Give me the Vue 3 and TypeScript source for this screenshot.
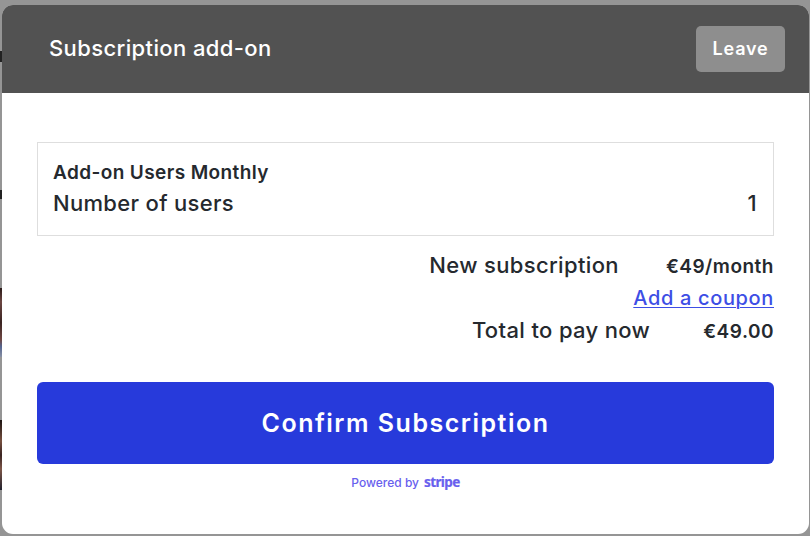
<script setup lang="ts">
interface AddOn {
  name: string
  label: string
  quantity: number
}

const addOn: AddOn = { name: 'Add-on Users Monthly', label: 'Number of users', quantity: 1 }
const recurring: string = '€49/month'
const total: string = '€49.00'
</script>

<template>
  <div class="backdrop">
    <section class="modal" role="dialog" aria-labelledby="title">
      <header class="head">
        <h1 id="title"><span>Subscription add-on</span></h1>
        <button class="leave" type="button"><span>Leave</span></button>
      </header>
      <main class="body">
        <div class="item">
          <div class="name"><span>{{ addOn.name }}</span></div>
          <div class="qty">
            <span>{{ addOn.label }}</span>
            <span class="num">{{ addOn.quantity }}</span>
          </div>
        </div>
        <div class="summary">
          <div class="row">
            <span class="label">New subscription</span>
            <strong class="monthly">{{ recurring }}</strong>
          </div>
          <div class="row discount"><a class="coupon" href="#">Add a coupon</a></div>
          <div class="row last">
            <span class="label pay">Total to pay now</span>
            <strong class="total">{{ total }}</strong>
          </div>
        </div>
        <button class="confirm" type="button"><span>Confirm Subscription</span></button>
        <div class="powered"><span class="by">Powered by</span><span class="stripe">stripe</span></div>
      </main>
    </section>
  </div>
</template>

<style>
body {
  margin: 0;
  background: #959595;
}
</style>

<style scoped>
.backdrop {
  box-sizing: border-box;
  width: 810px;
  height: 536px;
  padding: 5px 1px 2px 2px;
  background:
    linear-gradient(#222, #222) 0 51px / 2px 11px no-repeat,
    linear-gradient(#222, #222) 0 190px / 2px 9px no-repeat,
    linear-gradient(#2a1a18, #6b4642 20%, #3a2422 50%, #704844 75%, #55658f 85%, #8890a4) 0 288px / 2px 69px no-repeat,
    linear-gradient(#1c1412, #76503f 30%, #3a2422 50%, #7d5648 70%, #22222e) 0 420px / 2px 70px no-repeat,
    #959595;
  font-family: Inter, "Liberation Sans", sans-serif;
  color: #25292e;
}
.modal {
  display: flex;
  flex-direction: column;
  height: 529px;
  border-radius: 11px;
  overflow: hidden;
  background: #fff;
}
.head {
  box-sizing: border-box;
  display: flex;
  align-items: center;
  justify-content: space-between;
  height: 88px;
  padding: 0 24px 0 47px;
  background: #525252;
  color: #fff;
}
h1 {
  margin: -3px 0 0;
  font-size: 22px;
  line-height: 28px;
  font-weight: 500;
  letter-spacing: 0.38px;
}
button {
  border: 0;
  padding: 0;
  font-family: inherit;
  color: #fff;
}
.leave {
  width: 89px;
  height: 46px;
  margin-top: -1px;
  border-radius: 5px;
  background: #8e8e8e;
  font-size: 18px;
  font-weight: 600;
  letter-spacing: 0.8px;
}
.body {
  padding: 49px 35px 0;
}
.item {
  box-sizing: border-box;
  height: 94px;
  padding: 15px 15px 0;
  border: 1px solid #dedede;
}
.name {
  font-size: 19px;
  font-weight: 600;
  line-height: 30px;
  letter-spacing: 0.4px;
}
.qty {
  display: flex;
  justify-content: space-between;
  font-size: 22px;
  font-weight: 500;
  line-height: 30px;
  letter-spacing: 0.32px;
}
.num {
  padding-right: 1px;
}
.summary {
  padding-top: 13px;
}
.row {
  display: flex;
  justify-content: flex-end;
  align-items: baseline;
  height: 32px;
  line-height: 32px;
  font-size: 22px;
}
.row.discount {
  box-sizing: border-box;
  height: 33px;
  padding-top: 1px;
}
.label {
  font-weight: 500;
  letter-spacing: 0.35px;
  margin-right: 47px;
}
.pay {
  margin-right: 53px;
}
strong {
  font-size: 19px;
  font-weight: 600;
  letter-spacing: 0.5px;
}
.coupon {
  color: #3d4ee5;
  font-size: 20px;
  font-weight: 500;
  letter-spacing: 0.65px;
  text-decoration-thickness: 1px;
  text-underline-offset: 2px;
}
.confirm {
  display: block;
  width: 100%;
  height: 82px;
  margin-top: 36px;
  border-radius: 6px;
  background: #273adb;
  font-size: 25px;
  font-weight: 600;
  letter-spacing: 1.5px;
}
.powered {
  display: flex;
  justify-content: center;
  align-items: baseline;
  gap: 5px;
  padding-top: 8px;
  line-height: 20px;
  color: #6860ee;
}
.by {
  font-size: 12px;
  font-weight: 500;
}
.stripe {
  font-family: "Noto Sans", sans-serif;
  font-size: 13.5px;
  font-weight: 700;
  letter-spacing: -0.6px;
  -webkit-text-stroke: 0.2px currentColor;
}
</style>
